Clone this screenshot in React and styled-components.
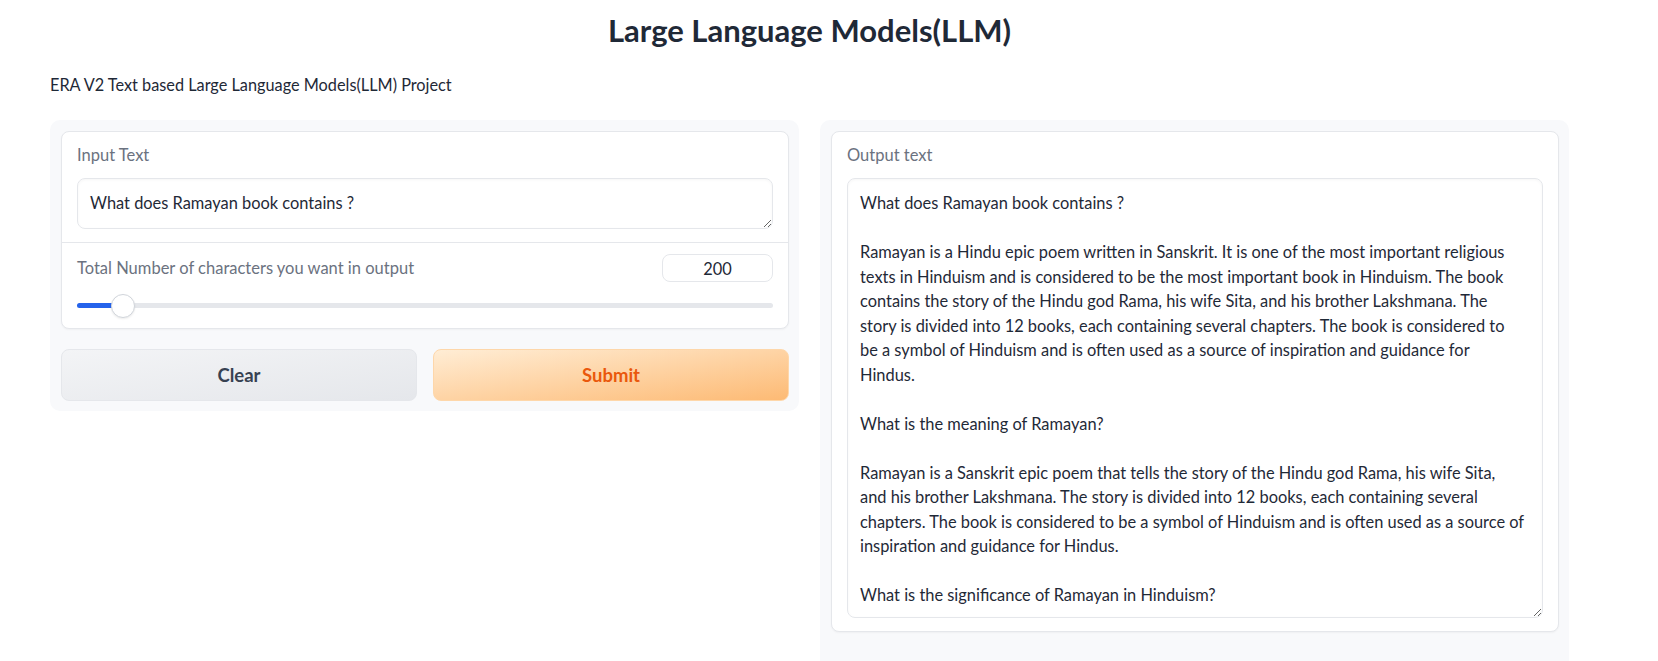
import styled, { createGlobalStyle } from 'styled-components';

const GlobalStyle = createGlobalStyle`
  body {
    margin: 0;
    background: #ffffff;
    font-family: Lato, "Noto Sans", sans-serif;
    color: #1f2937;
    overflow: hidden;
  }
`;

const OUTPUT_LINES = [
  'What does Ramayan book contains ?',
  '',
  'Ramayan is a Hindu epic poem written in Sanskrit. It is one of the most important religious',
  'texts in Hinduism and is considered to be the most important book in Hinduism. The book',
  'contains the story of the Hindu god Rama, his wife Sita, and his brother Lakshmana. The',
  'story is divided into 12 books, each containing several chapters. The book is considered to',
  'be a symbol of Hinduism and is often used as a source of inspiration and guidance for',
  'Hindus.',
  '',
  'What is the meaning of Ramayan?',
  '',
  'Ramayan is a Sanskrit epic poem that tells the story of the Hindu god Rama, his wife Sita,',
  'and his brother Lakshmana. The story is divided into 12 books, each containing several',
  'chapters. The book is considered to be a symbol of Hinduism and is often used as a source of',
  'inspiration and guidance for Hindus.',
  '',
  'What is the significance of Ramayan in Hinduism?',
];

export default function App() {
  const chars = 200;
  const max = 3000;
  const pct = (chars / max) * 100;

  return (
    <>
      <GlobalStyle />
      <Page>
        <Title>Large Language Models(LLM)</Title>
        <Description>ERA V2 Text based Large Language Models(LLM) Project</Description>
        <Columns>
          <Panel>
            <Card>
              <Section>
                <Label>Input Text</Label>
                <TextBox rows={1} readOnly value='What does Ramayan book contains ?' />
              </Section>
              <Section $divided>
                <SliderHead>
                  <Label>Total Number of characters you want in output</Label>
                  <NumberBox type='number' readOnly value={chars} />
                </SliderHead>
                <Track role='slider' aria-valuemin={0} aria-valuemax={max} aria-valuenow={chars}>
                  <Fill style={{ width: `${pct}%` }} />
                  <Thumb style={{ left: `${pct}%` }} />
                </Track>
              </Section>
            </Card>
            <ButtonRow>
              <Button>Clear</Button>
              <Button $primary>Submit</Button>
            </ButtonRow>
          </Panel>
          <Panel $tall>
            <Card>
              <Section>
                <Label>Output text</Label>
                <TextBox $output wrap='off' readOnly value={OUTPUT_LINES.join('\n')} />
              </Section>
            </Card>
          </Panel>
        </Columns>
      </Page>
    </>
  );
}

const Page = styled.div`
  width: 1519px;
  margin-left: 50px;
`;

const Title = styled.h1`
  margin: 0;
  padding-top: 10px;
  text-align: center;
  font-size: 31px;
  line-height: 40px;
  font-weight: 700;
  color: #1f2937;
`;

const Description = styled.p`
  margin: 23px 0 23px;
  font-size: 16.3px;
  line-height: 24px;
  color: #1f2937;
`;

const Columns = styled.div`
  display: grid;
  grid-template-columns: 1fr 1fr;
  gap: 21px;
  align-items: start;
`;

const Panel = styled.div`
  display: flex;
  flex-direction: column;
  gap: 20px;
  padding: 11px 10px ${p => (p.$tall ? '40px' : '10px')} 11px;
  background: #f8f9fb;
  border-radius: 10px;
`;

const Card = styled.div`
  background: #ffffff;
  border: 1px solid #e5e7eb;
  border-radius: 8px;
  box-shadow: 0 1px 2px rgba(0, 0, 0, 0.04);
  overflow: hidden;
`;

const Section = styled.div`
  display: flex;
  flex-direction: column;
  gap: 11px;
  padding: 11px 15px 13px 15px;
  border-top: ${p => (p.$divided ? '1px solid #e5e7eb' : 'none')};
`;

const Label = styled.span`
  font-size: 16.5px;
  line-height: 24px;
  color: #6b7280;
`;

const TextBox = styled.textarea`
  display: block;
  box-sizing: border-box;
  width: 100%;
  height: ${p => (p.$output ? '440px' : '51px')};
  padding: 12px 12px;
  border: 1px solid #e5e7eb;
  border-radius: 8px;
  box-shadow: inset 0 1px 3px rgba(0, 0, 0, 0.04);
  font-family: Lato, "Noto Sans", sans-serif;
  font-size: 16.4px;
  line-height: 24.5px;
  color: #1f2937;
  background: #ffffff;
  resize: vertical;
  overflow: hidden;
  white-space: pre;
  outline: none;
`;

const SliderHead = styled.div`
  display: flex;
  justify-content: space-between;
  align-items: center;
`;

const NumberBox = styled.input`
  box-sizing: border-box;
  width: 111px;
  height: 28px;
  border: 1px solid #e5e7eb;
  border-radius: 8px;
  font-family: Lato, "Noto Sans", sans-serif;
  font-size: 16.4px;
  text-align: center;
  color: #1f2937;
  outline: none;
  -moz-appearance: textfield;

  &::-webkit-inner-spin-button,
  &::-webkit-outer-spin-button {
    -webkit-appearance: none;
    margin: 0;
  }
`;

const Track = styled.div`
  position: relative;
  height: 5px;
  margin: 10px 0 7px;
  border-radius: 3px;
  background: #e5e7eb;
`;

const Fill = styled.div`
  height: 100%;
  border-radius: 3px;
  background: #2563eb;
`;

const Thumb = styled.div`
  position: absolute;
  top: 50%;
  width: 24px;
  height: 24px;
  box-sizing: border-box;
  transform: translate(-50%, -50%);
  border-radius: 50%;
  background: #ffffff;
  border: 1px solid #d1d5db;
  box-shadow: 0 1px 2px rgba(0, 0, 0, 0.08);
`;

const ButtonRow = styled.div`
  display: grid;
  grid-template-columns: 1fr 1fr;
  gap: 16px;
`;

const Button = styled.button`
  height: 52px;
  border-radius: 8px;
  font-family: Lato, "Noto Sans", sans-serif;
  font-size: 18.5px;
  font-weight: 700;
  cursor: pointer;
  border: 1px solid ${p => (p.$primary ? '#fed7aa' : '#e5e7eb')};
  color: ${p => (p.$primary ? '#ea580c' : '#374151')};
  background: ${p =>
    p.$primary
      ? 'linear-gradient(to bottom right, #ffedd5, #fdba74)'
      : 'linear-gradient(to bottom right, #f3f4f6, #e5e7eb)'};
`;
